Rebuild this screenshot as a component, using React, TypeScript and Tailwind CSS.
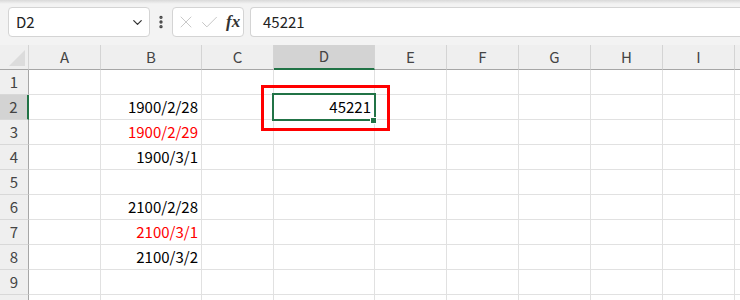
import { ChevronDown, EllipsisVertical, X, Check } from "lucide-react"

const cols = [
  { k: "A", w: "w-[72px]" },
  { k: "B", w: "w-[101px]" },
  { k: "C", w: "w-[72px]" },
  { k: "D", w: "w-[101px]" },
  { k: "E", w: "w-[72px]" },
  { k: "F", w: "w-[72px]" },
  { k: "G", w: "w-[72px]" },
  { k: "H", w: "w-[72px]" },
  { k: "I", w: "w-[72px]" },
  { k: "", w: "w-[72px]" },
]

const data: Record<number, { b?: string; red?: boolean }> = {
  2: { b: "1900/2/28" },
  3: { b: "1900/2/29", red: true },
  4: { b: "1900/3/1" },
  6: { b: "2100/2/28" },
  7: { b: "2100/3/1", red: true },
  8: { b: "2100/3/2" },
}

function FormulaBar() {
  return (
    <div className="h-[45px] bg-[#f3f3f3] flex flex-col">
      <div className="h-[4px] bg-linear-to-b from-[#d9d9d9] to-[#f3f3f3]" />
      <div className="flex items-start pt-[3px] pl-2">
        <div className="w-[142px] h-[30px] rounded-[4px] border border-[#d4d4d4] bg-white flex items-center justify-between pl-[7px] pr-[4px]">
          <span className="text-[15px] text-[#222]">D2</span>
          <ChevronDown size={15} strokeWidth={2} className="text-[#333]" />
        </div>
        <div className="w-[22px] h-[30px] flex items-center justify-center">
          <EllipsisVertical size={16} strokeWidth={3} className="text-[#444]" />
        </div>
        <div className="w-[72px] h-[30px] rounded-[4px] border border-[#d4d4d4] bg-white flex items-center pl-[3px] gap-[3px]">
          <X size={20} strokeWidth={1.1} className="text-[#c4c4c4]" />
          <Check size={21} strokeWidth={1.1} className="text-[#c4c4c4]" />
          <span className="ml-[3px] text-[17px] italic font-bold text-[#333] [font-family:'Liberation_Serif',serif]">fx</span>
        </div>
        <div className="ml-[6px] flex-1 h-[30px] rounded-l-[4px] border border-r-0 border-[#d4d4d4] bg-white flex items-center pl-[12px]">
          <span className="text-[15px] text-[#222]">45221</span>
        </div>
      </div>
    </div>
  )
}

function HeaderRow() {
  return (
    <div className="flex h-[25px]">
      <div className="w-[29px] shrink-0 bg-[#efefef] border-r border-b border-r-[#d4d4d4] border-b-[#a6a6a6] flex items-end justify-end p-[3px]">
        <div className="w-[16px] h-[16px] bg-[#dcdcdc] [clip-path:polygon(100%_0,100%_100%,0_100%)]" />
      </div>
      {cols.map((c, i) => (
        <div
          key={i}
          className={`${c.w} shrink-0 flex items-center justify-center text-[15px] text-[#444] border-r border-r-[#d4d4d4] ${
            c.k === "D" ? "bg-[#d3d3d3] border-b-2 border-b-[#217346]" : "bg-[#efefef] border-b border-b-[#a6a6a6]"
          }`}
        >
          {c.k}
        </div>
      ))}
    </div>
  )
}

function Row({ n }: { n: number }) {
  const d = data[n]
  return (
    <div className="flex h-[25px]">
      <div
        className={`w-[29px] shrink-0 border-b border-b-[#d8d8d8] flex items-center justify-center text-[15px] text-[#444] ${
          n === 2 ? "bg-[#d3d3d3] border-r-2 border-r-[#217346]" : "bg-[#efefef] border-r border-r-[#a6a6a6]"
        }`}
      >
        {n < 10 ? n : null}
      </div>
      {cols.map((c, i) => (
        <div
          key={i}
          className={`${c.w} shrink-0 border-r border-b border-[#e1e1e1] flex items-center justify-end pr-[3px] text-[15px] ${
            d?.red ? "text-[#ff0000]" : "text-black"
          }`}
        >
          {c.k === "B" ? d?.b : c.k === "D" && n === 2 ? "45221" : null}
        </div>
      ))}
    </div>
  )
}

export default function App() {
  return (
    <div className="w-[740px] h-[300px] overflow-hidden bg-white relative [font-family:'Noto_Sans_CJK_JP','Noto_Sans',sans-serif]">
      <FormulaBar />
      <div className="flex flex-col">
        <HeaderRow />
        {[1, 2, 3, 4, 5, 6, 7, 8, 9, 10].map((n) => (
          <Row key={n} n={n} />
        ))}
      </div>
      {/* selected cell */}
      <div className="absolute left-[272px] top-[93px] w-[104px] h-[28px] border-2 border-[#217346]" />
      <div className="absolute left-[370px] top-[117px] w-[7px] h-[7px] bg-[#217346] border border-white" />
      {/* red annotation */}
      <div className="absolute left-[261px] top-[85px] w-[129px] h-[46px] border-[3px] border-[#ff0000]" />
    </div>
  )
}
